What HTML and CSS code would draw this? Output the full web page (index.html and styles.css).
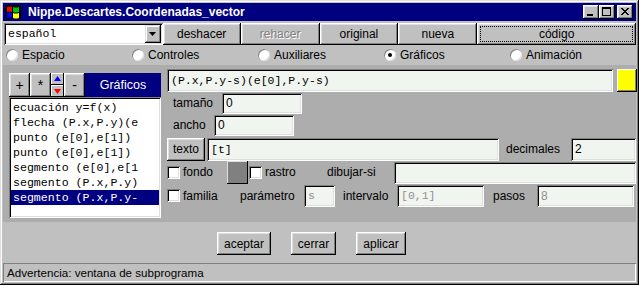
FILE: index.html
```html
<!DOCTYPE html>
<html lang="es">
<head>
    <meta charset="UTF-8">
    <title>Nippe.Descartes.Coordenadas_vector</title>
    <link rel="stylesheet" href="styles.css">
</head>
<body>
    <div class="window">
        <!-- barra de título -->
        <div class="titlebar">
            <svg class="app-icon" viewBox="0 0 16 16" width="16" height="16">
                <rect x="0" y="1" width="16" height="14" fill="#000"/>
                <path d="M2 3 Q4 2 7 3 L7 8 Q4 7 2 8 Z" fill="#ff0000"/>
                <path d="M8 3 Q11 4 14 3 L14 8 Q11 9 8 8 Z" fill="#00c000"/>
                <path d="M2 9 Q4 8 7 9 L7 14 Q4 13 2 14 Z" fill="#0000ff"/>
                <path d="M8 9 Q11 10 14 9 L14 14 Q11 15 8 14 Z" fill="#ffff00"/>
            </svg>
            <span class="title">Nippe.Descartes.Coordenadas_vector</span>
            <div class="caption">
                <span class="cap-btn">
                    <svg viewBox="0 0 16 14" width="16" height="14"><rect x="4" y="9" width="6" height="2" fill="#000"/></svg>
                </span>
                <span class="cap-btn">
                    <svg viewBox="0 0 16 14" width="16" height="14"><rect x="3.5" y="2.5" width="8" height="8" fill="none" stroke="#000"/><rect x="3" y="2" width="9" height="2" fill="#000"/></svg>
                </span>
                <span class="cap-btn close">
                    <svg viewBox="0 0 16 14" width="16" height="14"><path d="M4 3 L11 10 M5 3 L12 10 M11 3 L4 10 M12 3 L5 10" stroke="#000" stroke-width="1"/></svg>
                </span>
            </div>
        </div>

        <!-- barra de herramientas -->
        <div class="toolbar">
            <div class="combo">
                <span class="combo-value">español</span>
                <span class="combo-arrow">
                    <svg viewBox="0 0 16 17" width="16" height="17"><path d="M4 7 L11 7 L7.5 11 Z" fill="#000"/></svg>
                </span>
            </div>
            <button class="btn tool t78">deshacer</button>
            <button class="btn tool t79 disabled">rehacer</button>
            <button class="btn tool t79">original</button>
            <button class="btn tool t79">nueva</button>
            <button class="btn tool focus t159">código</button>
        </div>

        <!-- pestañas -->
        <div class="tabs">
            <label class="tab"><span class="radio"></span>Espacio</label>
            <label class="tab"><span class="radio"></span>Controles</label>
            <label class="tab"><span class="radio"></span>Auxiliares</label>
            <label class="tab"><span class="radio checked"></span>Gráficos</label>
            <label class="tab"><span class="radio"></span>Animación</label>
        </div>

        <div class="panel">
            <div class="side">
                <div class="side-tools">
                    <button class="btn sq">+</button>
                    <button class="btn sq">*</button>
                    <div class="updown">
                        <span class="btn half"><svg viewBox="0 0 13 12" width="13" height="12"><path d="M3 8 L10 8 L6.5 3 Z" fill="#0000ff"/></svg></span>
                        <span class="btn half"><svg viewBox="0 0 13 12" width="13" height="12"><path d="M3 4 L10 4 L6.5 9 Z" fill="#ff0000"/></svg></span>
                    </div>
                    <button class="btn sq">-</button>
                    <div class="side-title">Gráficos</div>
                </div>
                <ul class="list">
                    <li>ecuación y=f(x)</li>
                    <li>flecha (P.x,P.y)(e</li>
                    <li>punto (e[0],e[1])</li>
                    <li>punto (e[0],e[1])</li>
                    <li>segmento (e[0],e[1</li>
                    <li>segmento (P.x,P.y)</li>
                    <li class="selected">segmento (P.x,P.y-</li>
                </ul>
            </div>

            <div class="editor">
                <div class="row r-expr">
                    <div class="field mono f446">(P.x,P.y-s)(e[0],P.y-s)</div>
                    <span class="swatch yellow"></span>
                </div>
                <div class="row r-small">
                    <span class="lbl l-tam">tamaño</span>
                    <div class="field f80">0</div>
                </div>
                <div class="row r-small r-ancho">
                    <span class="lbl l-ancho">ancho</span>
                    <div class="field f80">0</div>
                </div>
                <div class="row r-text">
                    <button class="btn texto">texto</button>
                    <div class="field mono f292">[t]</div>
                    <span class="lbl l-dec">decimales</span>
                    <div class="field f65">2</div>
                </div>
                <div class="row r-check">
                    <span class="check"></span>
                    <span class="lbl l-fondo">fondo</span>
                    <span class="swatch grey"></span>
                    <span class="check"></span>
                    <span class="lbl l-rastro">rastro</span>
                    <span class="lbl l-dib">dibujar-si</span>
                    <div class="field f242"></div>
                </div>
                <div class="row r-fam">
                    <span class="check"></span>
                    <span class="lbl l-fam">familia</span>
                    <span class="lbl l-par">parámetro</span>
                    <div class="field mono off f31">s</div>
                    <span class="lbl l-int">intervalo</span>
                    <div class="field mono off f87">[0,1]</div>
                    <span class="lbl l-pasos">pasos</span>
                    <div class="field off f97">8</div>
                </div>
            </div>
        </div>

        <div class="actions">
            <button class="btn act a54">aceptar</button>
            <button class="btn act a45">cerrar</button>
            <button class="btn act a50">aplicar</button>
        </div>

        <div class="status">Advertencia: ventana de subprograma</div>
    </div>
</body>
</html>
```

FILE: styles.css
```css
* {
    margin: 0;
    padding: 0;
    box-sizing: border-box;
}

body {
    width: 639px;
    height: 285px;
    overflow: hidden;
    background: #c0c0c0;
    font-family: "Liberation Sans", Arial, sans-serif;
    font-size: 12px;
    color: #000;
}

.mono {
    font-family: "Liberation Mono", "Courier New", monospace;
    font-size: 11.5px;
}

.window {
    width: 639px;
    height: 285px;
    padding: 3px;
    display: flex;
    flex-direction: column;
    background: #c0c0c0;
    box-shadow: inset -1px -1px #000, inset 1px 1px #dfdfdf,
                inset -2px -2px #808080, inset 2px 2px #fff;
}

/* botones con relieve */
.btn {
    display: flex;
    align-items: center;
    justify-content: center;
    background: #c0c0c0;
    border: none;
    font: inherit;
    color: #000;
    box-shadow: inset -1px -1px #000, inset 1px 1px #fff,
                inset -2px -2px #808080, inset 2px 2px #dfdfdf;
}

/* título */
.titlebar {
    height: 18px;
    display: flex;
    align-items: center;
    padding: 0 3px 0 2px;
    background: #000080;
    color: #fff;
}

.app-icon {
    margin-right: 7px;
    flex: none;
}

.title {
    flex: 1;
    font-weight: bold;
    font-size: 12px;
    white-space: nowrap;
}

.caption {
    display: flex;
}

.cap-btn {
    width: 16px;
    height: 14px;
    background: #c0c0c0;
    box-shadow: inset -1px -1px #000, inset 1px 1px #fff,
                inset -2px -2px #808080, inset 2px 2px #dfdfdf;
}

.cap-btn svg {
    display: block;
}

.cap-btn.close {
    margin-left: 2px;
}

/* herramientas */
.toolbar {
    height: 22px;
    margin-top: 2px;
    padding-left: 1px;
    display: flex;
}

.combo {
    width: 159px;
    height: 22px;
    display: flex;
    align-items: center;
    padding: 2px;
    background: #fff;
    box-shadow: inset 1px 1px #808080, inset -1px -1px #fff,
                inset 2px 2px #000, inset -2px -2px #dfdfdf;
}

.combo-value {
    flex: 1;
    padding-left: 2px;
    font-family: "Liberation Mono", "Courier New", monospace;
    font-size: 11.5px;
}

.combo-arrow {
    width: 16px;
    height: 18px;
    background: #c0c0c0;
    box-shadow: inset -1px -1px #000, inset 1px 1px #dfdfdf,
                inset -2px -2px #808080, inset 2px 2px #fff;
}

.combo-arrow svg {
    display: block;
}

.tool {
    height: 22px;
}

.t78 { width: 78px; }
.t79 { width: 79px; }
.t159 { width: 159px; }

.disabled {
    color: #808080;
    text-shadow: 1px 1px #fff;
}

.focus {
    position: relative;
}

.focus::after {
    content: "";
    position: absolute;
    inset: 3px;
    border: 1px dotted #000;
}

/* pestañas */
.tabs {
    height: 20px;
    padding-left: 3px;
    display: grid;
    grid-template-columns: repeat(5, 126px);
    align-items: center;
}

.tab {
    display: flex;
    align-items: center;
    gap: 4px;
}

.radio {
    width: 12px;
    height: 12px;
    border-radius: 50%;
    background: #fff;
    position: relative;
    box-shadow: inset 1px 1px #808080, inset -1px -1px #dfdfdf;
}

.radio.checked::after {
    content: "";
    position: absolute;
    left: 4px;
    top: 4px;
    width: 4px;
    height: 4px;
    border-radius: 50%;
    background: #000;
}

/* panel principal */
.panel {
    height: 158px;
    display: flex;
    background: #adadad;
}

.side {
    flex: none;
    width: 152px;
    margin-left: 6px;
    padding-top: 8px;
    display: flex;
    flex-direction: column;
}

.side-tools {
    height: 24px;
    display: flex;
}

.sq {
    width: 21px;
    height: 24px;
    font-size: 14px;
}

.updown {
    width: 13px;
    display: flex;
    flex-direction: column;
}

.half {
    height: 12px;
    box-shadow: inset -1px -1px #000, inset 1px 1px #fff;
}

.half svg {
    display: block;
}

.side-title {
    flex: 1;
    display: flex;
    align-items: center;
    justify-content: center;
    background: #000080;
    color: #fff;
    font-size: 12.5px;
}

.list {
    list-style: none;
    height: 121px;
    padding: 3px 2px 0 2px;
    background: #fff;
    box-shadow: inset 1px 1px #808080, inset -1px -1px #fff,
                inset 2px 2px #000, inset -2px -2px #dfdfdf;
    font-family: "Liberation Mono", "Courier New", monospace;
    font-size: 11.6px;
}

.list li {
    height: 15px;
    line-height: 15px;
    padding-left: 2px;
    white-space: nowrap;
    overflow: hidden;
}

.list li.selected {
    background: #000080;
    color: #fff;
}

.editor {
    flex: 1;
    min-width: 0;
    margin-left: 6px;
    padding-top: 4px;
    display: flex;
    flex-direction: column;
}

.row {
    display: flex;
    align-items: center;
}

.r-expr { height: 23px; }
.r-small { height: 21px; margin-top: 1px; }
.r-ancho { margin-top: 1px; }
.r-text { height: 23px; margin-top: 2px; }
.r-check { height: 23px; }
.r-fam { height: 22px; margin-top: 1px; }

.field {
    flex: none;
    height: 100%;
    display: flex;
    align-items: center;
    padding-left: 4px;
    background: #f0f5ef;
    white-space: nowrap;
    overflow: hidden;
    box-shadow: inset 1px 1px #808080, inset -1px -1px #fff,
                inset 2px 2px #000, inset -2px -2px #dfdfdf;
}

.field.off {
    color: #909090;
}

.r-small .field {
    height: 21px;
}

.r-check .field {
    height: 22px;
    margin-top: 1px;
}

.f446 { width: 446px; }
.f80 { width: 80px; }
.f292 { width: 292px; margin-left: 2px; }
.f65 { width: 65px; }
.f242 { width: 242px; }
.f31 { width: 31px; }
.f87 { width: 87px; }
.f97 { width: 97px; }

.lbl {
    flex: none;
    white-space: nowrap;
    padding-left: 6px;
}

.l-tam { width: 55px; }
.l-ancho { width: 47px; }
.l-dec { width: 72px; padding-left: 7px; }
.l-fondo { width: 47px; padding-left: 3px; }
.l-rastro { width: 65px; padding-left: 3px; }
.l-dib { width: 67px; padding-left: 0; }
.l-fam { width: 60px; padding-left: 3px; }
.l-par { width: 64px; padding-left: 0; }
.l-int { width: 62px; padding-left: 8px; }
.l-pasos { width: 53px; padding-left: 9px; }

.swatch {
    display: block;
    flex: none;
    height: 23px;
    box-shadow: inset -1px -1px #000, inset 1px 1px #fff,
                inset -2px -2px #808080;
}

.swatch.yellow {
    width: 20px;
    margin-left: 4px;
    background: #ffff00;
}

.swatch.grey {
    width: 21px;
    background: #808080;
    box-shadow: inset -1px -1px #000, inset 1px 1px #dfdfdf;
}

.texto {
    flex: none;
    width: 38px;
    height: 23px;
}

.check {
    width: 13px;
    height: 13px;
    flex: none;
    background: #fff;
    box-shadow: inset 1px 1px #808080, inset -1px -1px #fff,
                inset 2px 2px #000, inset -2px -2px #dfdfdf;
}

.r-check .swatch.grey + .check {
    margin-left: 1px;
}

/* acciones */
.actions {
    height: 23px;
    margin-top: 10px;
    padding-left: 214px;
    display: flex;
    gap: 20px;
}

.act {
    height: 23px;
}

.a54 { width: 54px; }
.a45 { width: 45px; }
.a50 { width: 50px; }

.status {
    height: 19px;
    margin-top: 8px;
    padding-left: 4px;
    display: flex;
    align-items: center;
    font-size: 11.6px;
    box-shadow: inset 1px 1px #808080, inset -1px -1px #fff;
}
```
